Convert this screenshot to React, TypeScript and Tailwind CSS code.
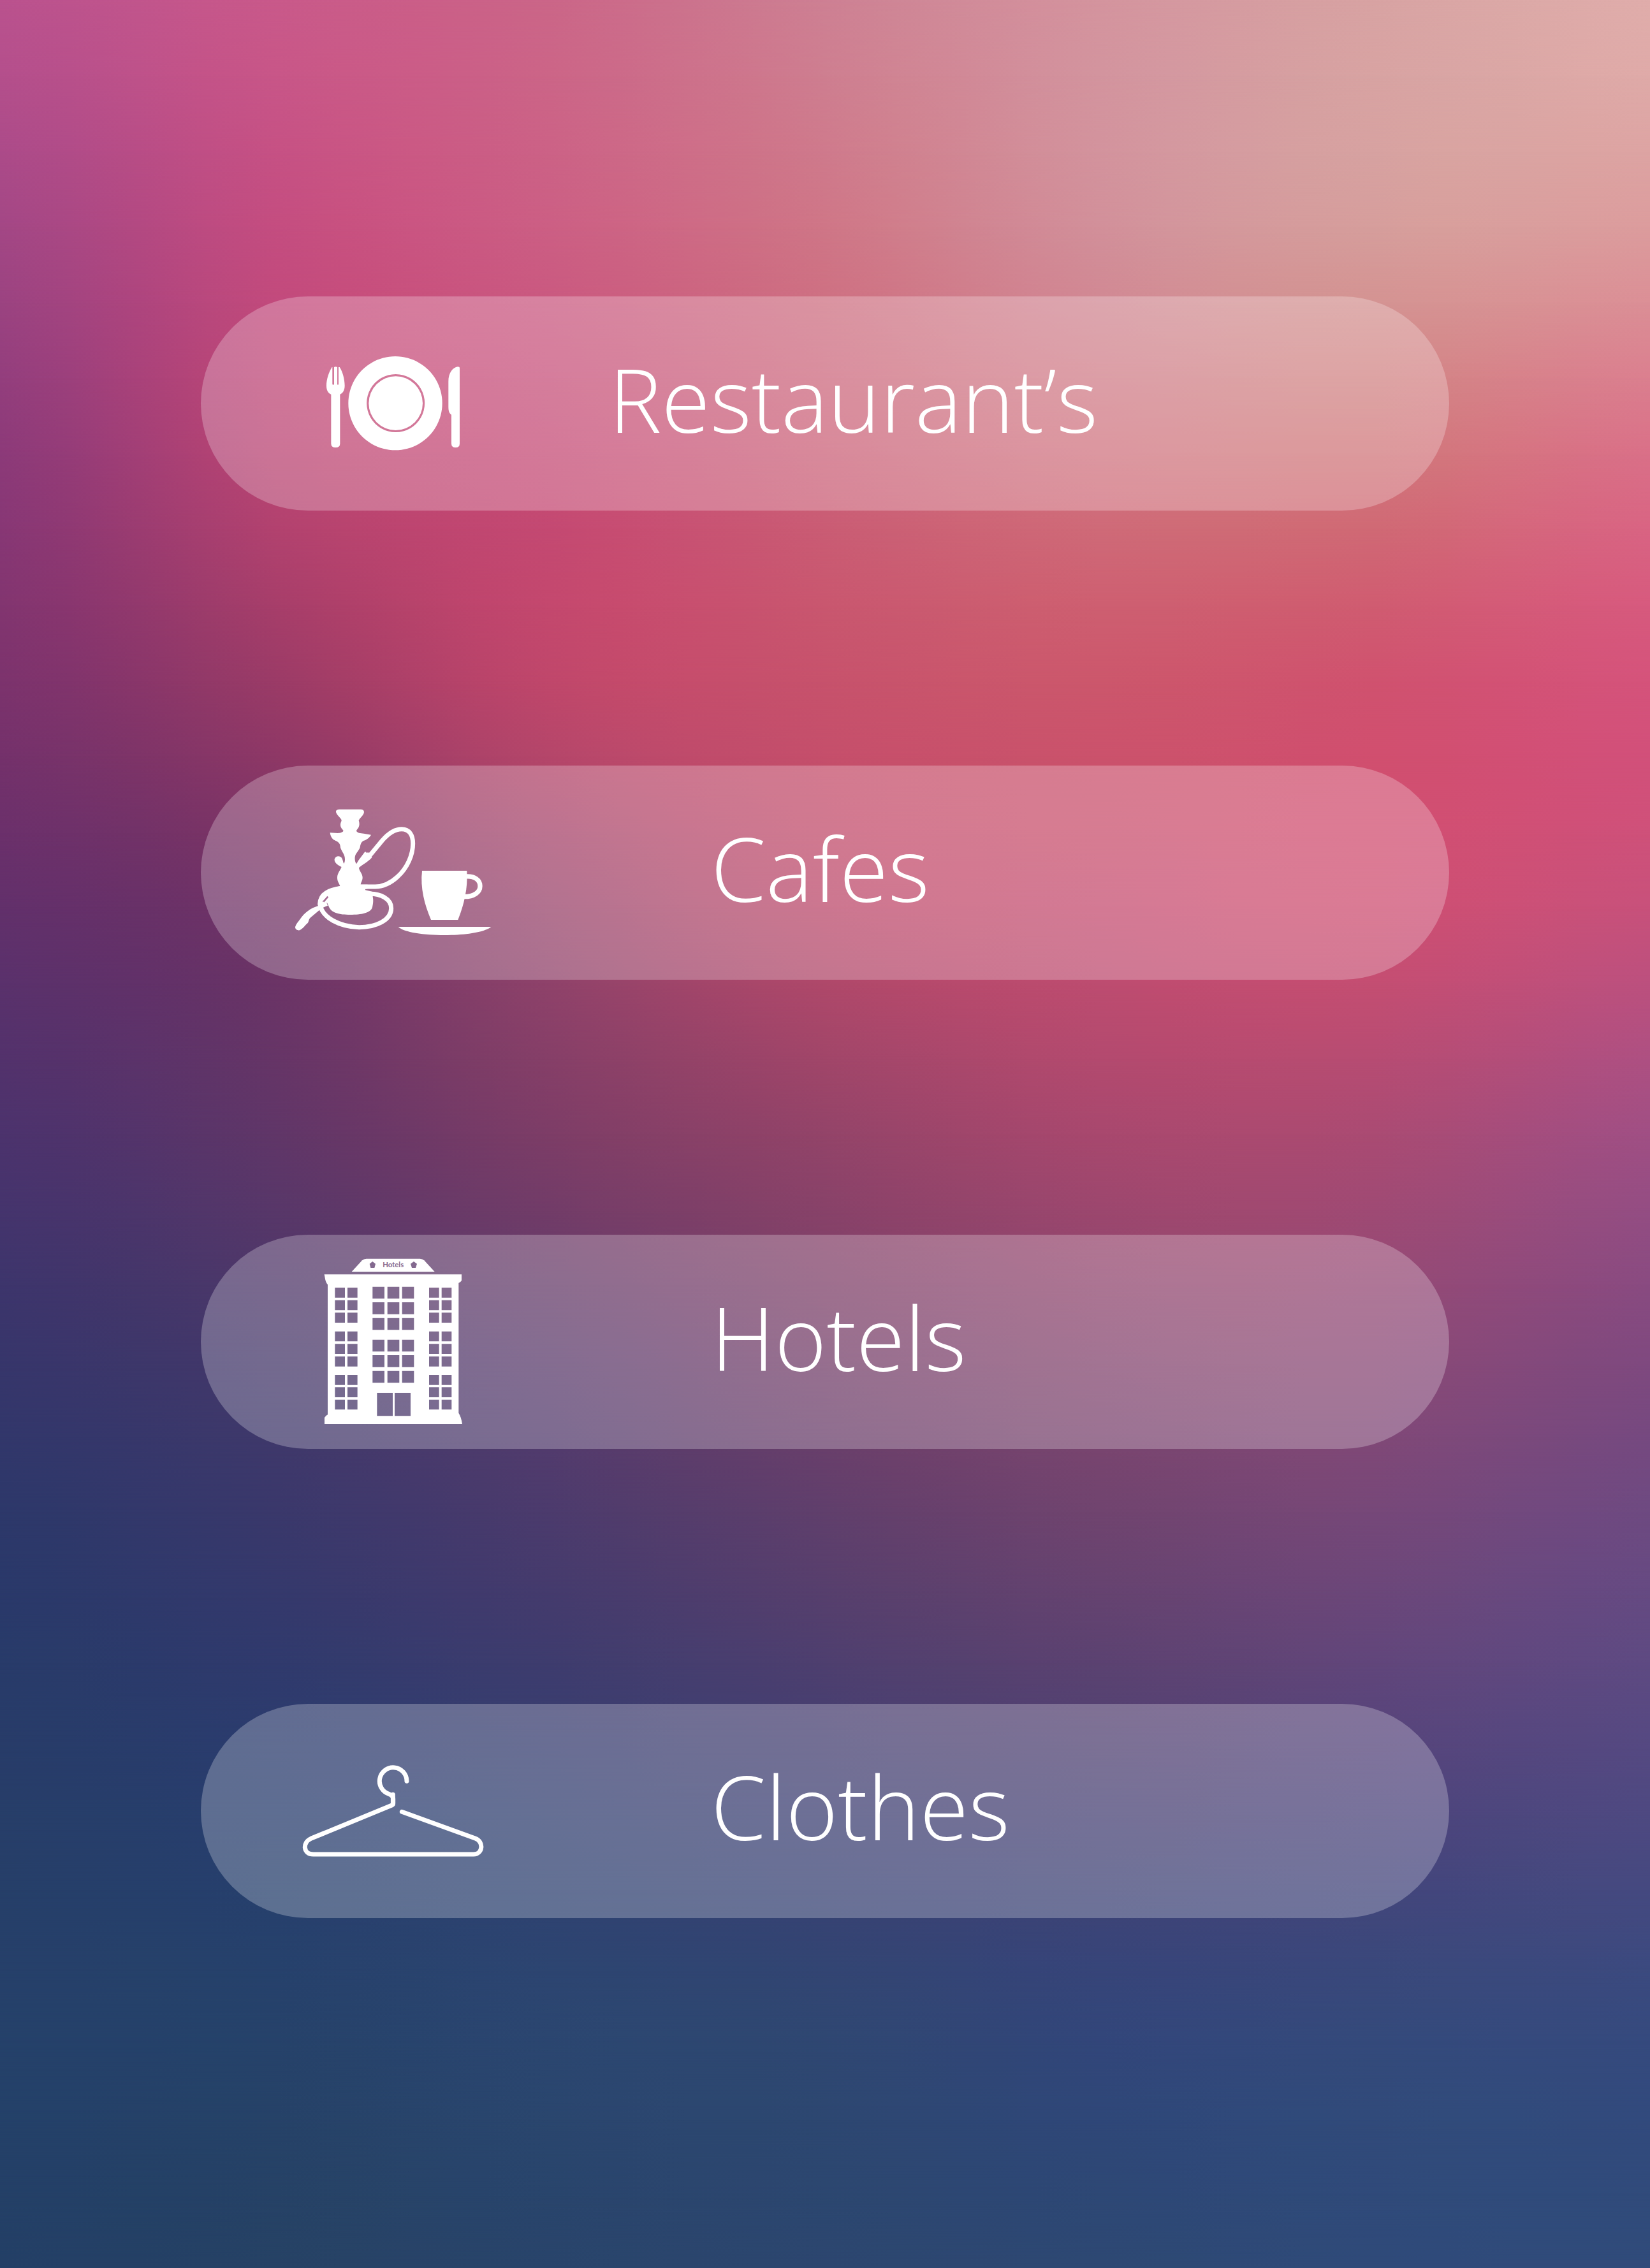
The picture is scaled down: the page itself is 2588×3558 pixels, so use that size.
import React from "react";

type Rgb = number[];

/* Colour mesh: control colours, left to right and top to bottom. */
const mesh: string[][] = [
  ["#ba528e", "#c9598a", "#cb6688", "#ce8093", "#d4949e", "#d8a3a3", "#e0adab"],
  ["#a34785", "#c44d80", "#cc5f84", "#cf7687", "#d2909a", "#d69e9c", "#dc9c9d"],
  ["#8c3a79", "#ba4573", "#c54c76", "#cb6279", "#d07480", "#d1777b", "#da7088"],
  ["#7c336d", "#9b3b67", "#c0476b", "#c7526c", "#cc576c", "#d0526f", "#d5537b"],
  ["#62306b", "#733466", "#99446b", "#bb4a6b", "#c54e70", "#ce4f72", "#c8517b"],
  ["#4c336d", "#603668", "#7d3d67", "#934469", "#a8486e", "#aa4b73", "#a04f84"],
  ["#37366b", "#46386a", "#5c3c6c", "#743f6a", "#84466f", "#8a4976", "#7f497f"],
  ["#2a396a", "#35396c", "#453b6d", "#573f6d", "#664370", "#6c477a", "#664a82"],
  ["#273e69", "#293e6e", "#334071", "#3e4073", "#474274", "#4c447b", "#4e4981"],
  ["#25416a", "#26426a", "#2b4670", "#2f4772", "#32467a", "#344a7b", "#354a7e"],
  ["#233f66", "#264265", "#29446b", "#2c466f", "#2d4873", "#2f4a79", "#304b7a"],
];

const parse = (hex: string): Rgb => [1, 3, 5].map((i) => parseInt(hex.slice(i, i + 2), 16));
const css = (c: Rgb) => `rgb(${c.map((v) => Math.max(0, Math.min(255, Math.round(v)))).join(" ")})`;

/* Catmull-Rom interpolation of a list of vectors, with the ends repeated. */
function refine(points: number[][], parts: number): number[][] {
  const at = (i: number) => points[Math.max(0, Math.min(points.length - 1, i))];
  const out: number[][] = [];
  for (let i = 0; i < points.length - 1; i++) {
    const [a, b, c, d] = [at(i - 1), at(i), at(i + 1), at(i + 2)];
    for (let k = 0; k < parts; k++) {
      const t = k / parts;
      out.push(
        b.map(
          (v, j) =>
            v +
            0.5 * t * (c[j] - a[j] + t * (2 * a[j] - 5 * v + 4 * c[j] - d[j] + t * (3 * (v - c[j]) + d[j] - a[j]))),
        ),
      );
    }
  }
  out.push(at(points.length - 1));
  return out;
}

const wide = mesh.map((row) => refine(row.map(parse), 4).flat());
const rows = refine(wide, 3).map((flat) => {
  const colours: string[] = [];
  for (let i = 0; i < flat.length; i += 3) colours.push(css(flat.slice(i, i + 3)));
  return colours;
});

function Backdrop() {
  const step = 100 / (rows.length - 1);
  return (
    <div className="absolute inset-0 -z-10 overflow-hidden" aria-hidden="true">
      {rows.map((row, i) => (
        <div
          key={i}
          className="absolute inset-0"
          style={{
            backgroundImage: `linear-gradient(to right, ${row.join(", ")})`,
            maskImage:
              i === 0
                ? undefined
                : `linear-gradient(to bottom, transparent ${(i - 1) * step}%, black ${i * step}%)`,
          }}
        />
      ))}
    </div>
  );
}

const iconClass = "h-[336px] w-[316px] shrink-0";

function PlateIcon() {
  return (
    <svg className={iconClass} viewBox="-63 -195 948 1008" fill="white" aria-hidden="true">
      <path d="M122 138C108 160 96 195 96 225C96 250 106 261 118 266V498Q118 516 139 516Q160 516 160 498V266C174 260 182 246 182 225C182 195 172 158 158 138L153 138V219Q150 224 147 219V138Q138 134 132 138V219Q128 224 124 219V138Z" />
      <path fillRule="evenodd" d="M420 87a221 221 0 1 0 .1 0ZM422 171a136.500 136.500 0 1 1 -.1 0Z" />
      <circle cx="422" cy="308" r="127" />
      <path d="M723 143Q723 136 714 136C690 140 670 165 670 205V325C670 345 674 356 684 362V498Q684 516 704 516Q723 516 723 498Z" />
    </svg>
  );
}

function HookahIcon() {
  return (
    <svg className={iconClass} viewBox="27 -147 948 1008" fill="white" aria-hidden="true">
      <path d="M246 59H350Q366 62 362 77C356 92 340 102 338 112C342 122 342 138 336 146C330 154 327 157 327 161C332 170 345 171 362 173L396 179C388 194 374 202 360 207C348 214 346 226 344 238C338 256 322 266 320 284C319 298 321 308 327 316C331 310 334 303 339 296L366 260Q371 256 374 263L384 262L400 286C380 308 352 322 339 334C339 348 356 362 356 380C356 394 348 402 347 413L380 413V433L369 434V439L404 447V470C408 490 405 505 402 520C394 548 350 555 298 555C246 555 208 548 196 514L190 500L150 480C180 444 215 428 250 420C246 406 236 398 237 378C238 358 254 342 257 330C244 324 222 312 224 294C228 276 252 275 260 291C264 300 264 307 268 315C274 306 274 290 271 280C266 262 252 250 251 232C249 212 230 208 218 201C208 192 204 180 203 169L240 171C254 171 264 166 266 160C260 150 252 146 252 132C252 120 258 116 257 109C252 98 236 88 231 72Q230 60 246 59Z" />
      <g fill="none" stroke="white" strokeWidth="21">
        <path d="M386 281L450 204C478 172 510 152 540 152C576 152 593 180 593 220C593 272 568 334 520 377C482 412 450 423 415 423H345" />
        <path d="M385 457C440 455 491 480 491 525C491 580 420 614 340 614C250 612 165 570 155 505C156 450 210 435 260 430" />
      </g>
      <path d="M150 512C110 524 82 546 62 576C52 590 40 602 39 616Q42 630 60 628C76 620 84 606 98 594C104 586 102 576 112 568L152 534Q168 520 192 512L180 480Z" />
      <path d="M172 494L193 470" stroke="#a66a94" strokeWidth="8" />
      <g transform="translate(450 60)">
        <path d="M186 288H397C402 370 384 446 355 519H228C197 446 177 370 186 288Z" />
        <path d="M392 315C434 312 459 332 459 360C459 390 430 410 384 410" fill="none" stroke="white" strokeWidth="22" />
        <path d="M74 552H511C480 578 390 591 292 591C195 591 100 578 74 552Z" />
      </g>
    </svg>
  );
}

const sideWindows = [180, 239, 298, 386, 445, 504, 591, 649, 707];
const centreWindows = [176, 249, 323, 425, 498, 572];
const openings = [
  ...sideWindows.flatMap((y) => [106, 165, 549, 608].map((x) => `M${x} ${y}v47h47v-47Z`)),
  ...centreWindows.flatMap((y) => [283, 353, 422].map((x) => `M${x} ${y}v56h56v-56Z`)),
  "M304 675v109h74v-109Z",
  "M387 675v109h75v-109Z",
].join("");

function HotelIcon() {
  return (
    <svg className={iconClass} viewBox="-93 -69 948 1008" fill="white" aria-hidden="true">
      <path d="M185 105L234 52Q242 44 254 44H506Q518 44 526 52L575 105Z" />
      <g fill="#83698f">
        <path d="M283 57L297 68L292 87H274L269 68Z" />
        <path d="M477 57L492 68L486 87H468L462 68Z" />
        <text x="380" y="85" textAnchor="middle" fontSize="34" fontWeight="700" fontFamily="Lato, sans-serif">
          Hotels
        </text>
      </g>
      <path
        fillRule="evenodd"
        d={`M56 118H702V146Q698 154 688 158V770Q700 788 705 822H57V792Q60 784 72 778V166C60 152 60 136 56 118Z${openings}`}
      />
    </svg>
  );
}

function HangerIcon() {
  return (
    <svg
      className={iconClass}
      viewBox="-3 -204 948 1008"
      fill="none"
      stroke="white"
      strokeWidth="21"
      strokeLinecap="round"
      strokeLinejoin="round"
      aria-hidden="true"
    >
      <path d="M534 160A64 64 0 1 0 452 221Q470 228 470 242V264Q470 270 464 273L83 430C42 448 46 504 94 504H848C892 504 898 444 856 429L511 304" />
      <path d="M469 223V268" />
    </svg>
  );
}

const categories = [
  { name: "Restaurant\u2019s", Icon: PlateIcon, indent: "pl-[180px]", href: "#restaurants" },
  { name: "Cafes", Icon: HookahIcon, indent: "pl-[340px]", href: "#cafes" },
  { name: "Hotels", Icon: HotelIcon, indent: "pl-[340px]", href: "#hotels" },
  { name: "Clothes", Icon: HangerIcon, indent: "pl-[340px]", href: "#clothes" },
];

export default function App() {
  return (
    <main className="relative isolate min-h-screen px-[315px] pt-[465px] pb-40">
      <Backdrop />
      <nav aria-label="Categories">
        <ul className="flex flex-col gap-[400px]">
          {categories.map(({ name, Icon, indent, href }) => (
            <li key={name}>
              <a href={href} className="flex items-center rounded-full bg-white/25 pl-36 text-white">
                <Icon />
                <span
                  className={`${indent} pb-4 font-['Open_Sans'] text-[139px] leading-[160px] font-light whitespace-nowrap`}
                >
                  {name}
                </span>
              </a>
            </li>
          ))}
        </ul>
      </nav>
    </main>
  );
}
